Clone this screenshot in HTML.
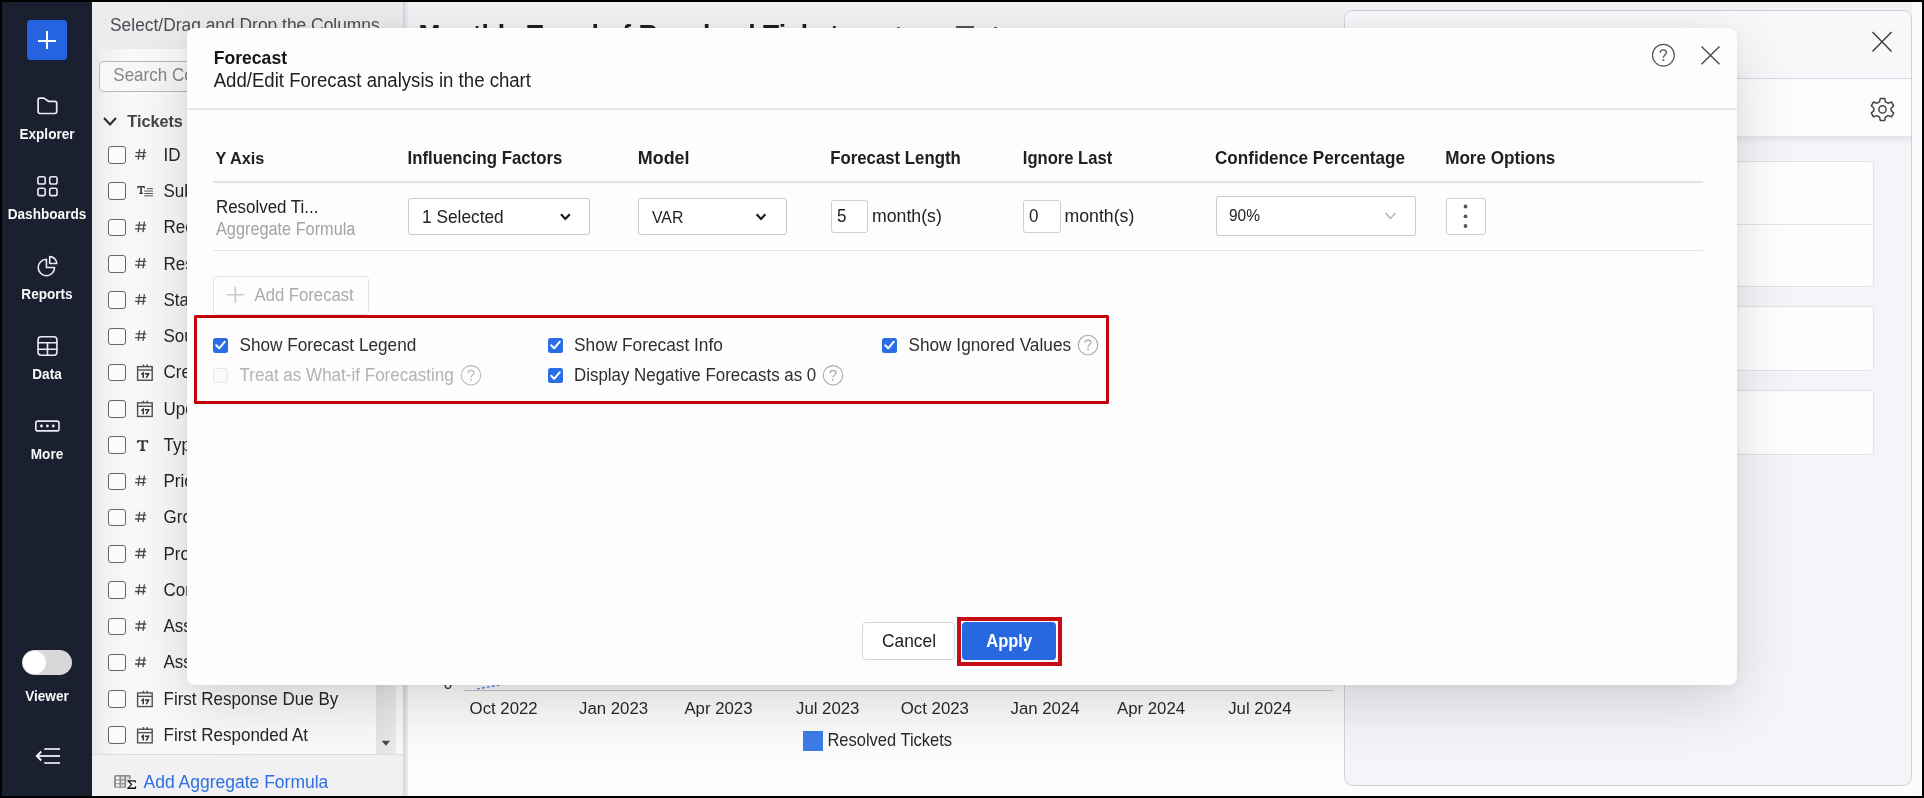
<!DOCTYPE html>
<html><head><meta charset="utf-8"><style>
*{box-sizing:border-box;margin:0;padding:0}
html,body{width:1924px;height:798px;overflow:hidden;background:#000}
body{position:relative;will-change:transform;font-family:"Liberation Sans",sans-serif;color:#222}
.a{position:absolute}
.t{position:absolute;white-space:nowrap;line-height:1}
svg{position:absolute;overflow:visible}
.cb{position:absolute;left:108px;width:18px;height:17.6px;border:1.25px solid #666;border-radius:3px;background:#fbfbfb}
.pl{left:163.5px;font-size:17px;color:#262626;transform:scaleY(1.07);transform-origin:0 14px}
</style></head><body>
<div class="a" style="left:2px;top:2px;width:90px;height:794px;background:#1b2031"></div>
<div class="a" style="left:92px;top:2px;width:312px;height:794px;background:linear-gradient(90deg,#e6e6ea 0,#f2f2f4 14px,#f9f9fa 40px,#fafafb 100%)"></div>
<div class="a" style="left:92px;top:2px;width:311px;height:47px;background:#ececef"></div>
<div class="a" style="left:403px;top:2px;width:1px;height:794px;background:#d6d6da"></div>
<div class="a" style="left:404px;top:2px;width:1518px;height:794px;background:linear-gradient(180deg,#f2f2f4 0,#f3f3f5 30px,#f6f6f7 300px,#fcfcfc 700px)"></div>
<div class="a" style="left:1912px;top:2px;width:10px;height:794px;background:#fafafa"></div>
<div class="a" style="left:404px;top:2px;width:4px;height:794px;background:linear-gradient(90deg,#d9dae0,#eeeef1)"></div>
<div class="a" style="left:27px;top:20px;width:40px;height:40px;border-radius:4px;background:#2563e0"></div>
<div class="a" style="left:46px;top:31px;width:2px;height:18px;background:#fff"></div>
<div class="a" style="left:38px;top:39.5px;width:18px;height:2px;background:#fff"></div>
<svg style="left:0;top:0" width="1924" height="798" viewBox="0 0 1924 798">
<g fill="none" stroke="#ececf0" stroke-width="1.6" stroke-linejoin="round" stroke-linecap="round">
<path d="M38.1,100 Q38.1,98.1 40,98.1 L43.9,98.1 L48.4,101.3 L54.8,101.3 Q56.7,101.3 56.7,103.2 L56.7,111.6 Q56.7,113.5 54.8,113.5 L40,113.5 Q38.1,113.5 38.1,111.6 Z" stroke-width="1.7"/>
<rect x="37.9" y="176.7" width="7.3" height="7.3" rx="1.8"/>
<rect x="49.7" y="176.7" width="7.3" height="7.3" rx="1.8"/>
<rect x="37.9" y="188.3" width="7.3" height="7.3" rx="1.8"/>
<rect x="49.7" y="188.3" width="7.3" height="7.3" rx="1.8"/>
<path d="M46.4,259.3 L46.4,267.5 L54.6,267.5 A8.2,8.2 0 1 1 46.4,259.3 Z"/>
<path d="M49.7,256.6 L49.7,263.5 L56.8,263.5 A7.1,7.1 0 0 0 49.7,256.6 Z"/>
<rect x="38.1" y="336.7" width="18.8" height="18.6" rx="3"/>
<path d="M38.1,342.8 H56.9 M38.1,349.3 H56.9 M47.5,342.8 V355.3"/>
<rect x="35.8" y="421.1" width="23.2" height="9.8" rx="2"/>
</g>
<g fill="#f0f0f4"><circle cx="41.5" cy="426" r="1.4"/><circle cx="47.4" cy="426" r="1.4"/><circle cx="53.3" cy="426" r="1.4"/></g>
<g fill="none" stroke-width="1.9" stroke-linecap="butt">
<path d="M44.3,749 H60.1 M44.3,763 H60.1" stroke="#cfcfd2"/>
<path d="M37.5,756 H60.1" stroke="#e4e7f0"/>
<path d="M41.3,751.5 L36.8,756 L41.3,760.5" stroke="#f4f4f6" stroke-linejoin="miter"/>
</g>
</svg>
<span class="t" style="left:-53px;width:200px;text-align:center;top:128.00px;font-size:13.6px;color:#fafafa;font-weight:700;transform:scaleY(1.14);transform-origin:0 11px;">Explorer</span>
<span class="t" style="left:-53px;width:200px;text-align:center;top:208.00px;font-size:13.6px;color:#fafafa;font-weight:700;transform:scaleY(1.14);transform-origin:0 11px;">Dashboards</span>
<span class="t" style="left:-53px;width:200px;text-align:center;top:288.00px;font-size:13.6px;color:#fafafa;font-weight:700;transform:scaleY(1.14);transform-origin:0 11px;">Reports</span>
<span class="t" style="left:-53px;width:200px;text-align:center;top:368.00px;font-size:13.6px;color:#fafafa;font-weight:700;transform:scaleY(1.14);transform-origin:0 11px;">Data</span>
<span class="t" style="left:-53px;width:200px;text-align:center;top:448.00px;font-size:13.6px;color:#fafafa;font-weight:700;transform:scaleY(1.14);transform-origin:0 11px;">More</span>
<span class="t" style="left:-53px;width:200px;text-align:center;top:690.00px;font-size:13.6px;color:#fafafa;font-weight:700;transform:scaleY(1.14);transform-origin:0 11px;">Viewer</span>
<div class="a" style="left:22px;top:650px;width:50px;height:25px;border-radius:13px;background:#d8d8da"></div>
<div class="a" style="left:22.5px;top:651px;width:23px;height:23px;border-radius:50%;background:#fff"></div>
<span class="t" style="left:110px;top:17.00px;font-size:17.4px;color:#4e4e52;font-weight:400;transform:scaleY(1.07);transform-origin:0 14px;">Select/Drag and Drop the Columns</span>
<div class="a" style="left:99px;top:61px;width:296px;height:31px;border:1px solid #b9b9bd;border-radius:5px;background:#f7f7f8"></div>
<span class="t" style="left:113.3px;top:67.00px;font-size:17px;color:#85858a;font-weight:400;transform:scaleY(1.07);transform-origin:0 14px;">Search Columns</span>
<svg style="left:0;top:0" width="300" height="798"><path d="M104,118 L110,124.5 L116,118" fill="none" stroke="#2b2b2b" stroke-width="2"/></svg>
<span class="t" style="left:127.3px;top:113.00px;font-size:16.2px;color:#444;font-weight:700;transform:scaleY(1.07);transform-origin:0 14px;">Tickets</span>
<div class="cb" style="top:146.20px"></div>
<span class="t pl" style="top:147px">ID</span>
<div class="cb" style="top:182.46px"></div>
<span class="t pl" style="top:183px">Subject</span>
<div class="cb" style="top:218.72px"></div>
<span class="t pl" style="top:219px">Request ID</span>
<div class="cb" style="top:254.98px"></div>
<span class="t pl" style="top:256px">Resolution</span>
<div class="cb" style="top:291.24px"></div>
<span class="t pl" style="top:292px">Status</span>
<div class="cb" style="top:327.50px"></div>
<span class="t pl" style="top:328px">Source</span>
<div class="cb" style="top:363.76px"></div>
<span class="t pl" style="top:364px">Created Time</span>
<div class="cb" style="top:400.02px"></div>
<span class="t pl" style="top:401px">Updated Time</span>
<div class="cb" style="top:436.28px"></div>
<span class="t pl" style="top:437px">Type</span>
<div class="cb" style="top:472.54px"></div>
<span class="t pl" style="top:473px">Priority</span>
<div class="cb" style="top:508.80px"></div>
<span class="t pl" style="top:509px">Group</span>
<div class="cb" style="top:545.06px"></div>
<span class="t pl" style="top:546px">Product</span>
<div class="cb" style="top:581.32px"></div>
<span class="t pl" style="top:582px">Contact</span>
<div class="cb" style="top:617.58px"></div>
<span class="t pl" style="top:618px">Assignee</span>
<div class="cb" style="top:653.84px"></div>
<span class="t pl" style="top:654px">Assigned To</span>
<div class="cb" style="top:690.10px"></div>
<span class="t pl" style="top:691px">First Response Due By</span>
<div class="cb" style="top:726.36px"></div>
<span class="t pl" style="top:727px">First Responded At</span>
<svg style="left:0;top:0" width="300" height="798">
<defs>
<g id="ihash" fill="none" stroke="#4a4a4a" stroke-width="1.3"><path d="M139.6,149.2 L138.2,159.6 M144.4,149.2 L143,159.6 M135.6,152.6 H146.2 M135,156.4 H145.6"/></g>
<g id="itext"><path d="M137.4,185.9 H144.8 V188.4 H144.1 Q143.8,187.2 142.4,187.2 H141.9 V192.7 H142.8 V193.9 H139.4 V192.7 H140.3 V187.2 H139.8 Q138.4,187.2 138.1,188.4 H137.4 Z" fill="#333" transform="translate(0,-36.26)"/>
<path d="M147,188.6 H153 M144.2,191 H153 M144.4,193.5 H153 M144.2,195.8 H153" stroke="#555" stroke-width="1" transform="translate(0,-36.26)"/></g>
<g id="itype"><path d="M137,440.3 H148.2 V443.3 H147.4 Q147,441.6 145.3,441.6 H143.7 V449.5 H145.2 V451 H140 V449.5 H141.5 V441.6 H139.9 Q138.2,441.6 137.8,443.3 H137 Z" fill="#333" transform="translate(0,-290.08)"/></g>
<g id="ical" transform="translate(0,-217.56)"><rect x="137.6" y="366.6" width="14.6" height="13.6" fill="none" stroke="#505050" stroke-width="1.4"/>
<path d="M137.6,370 H152.2" stroke="#505050" stroke-width="1.4"/>
<rect x="142.6" y="364.5" width="1.6" height="2" fill="#505050"/><rect x="146.4" y="364.5" width="1.6" height="2" fill="#505050"/>
<path d="M141.4,374.4 L143.2,373 L143.2,377.9" fill="none" stroke="#333" stroke-width="1.5"/><path d="M144.9,373.6 H148.6 L146.3,377.9" fill="none" stroke="#333" stroke-width="1.5"/></g>
</defs>
<use href="#ihash" x="0" y="0.0"/>
<use href="#itext" x="0" y="36.3"/>
<use href="#ihash" x="0" y="72.5"/>
<use href="#ihash" x="0" y="108.8"/>
<use href="#ihash" x="0" y="145.0"/>
<use href="#ihash" x="0" y="181.3"/>
<use href="#ical" x="0" y="217.6"/>
<use href="#ical" x="0" y="253.8"/>
<use href="#itype" x="0" y="290.1"/>
<use href="#ihash" x="0" y="326.3"/>
<use href="#ihash" x="0" y="362.6"/>
<use href="#ihash" x="0" y="398.9"/>
<use href="#ihash" x="0" y="435.1"/>
<use href="#ihash" x="0" y="471.4"/>
<use href="#ihash" x="0" y="507.6"/>
<use href="#ical" x="0" y="543.9"/>
<use href="#ical" x="0" y="580.2"/></svg>
<div class="a" style="left:376px;top:560px;width:20px;height:194px;background:linear-gradient(90deg,#e4e4e8,#ebebee)"></div>
<svg style="left:0;top:0" width="400" height="798"><path d="M381.6,740.8 L390.2,740.8 L385.9,745.8 Z" fill="#4a4a4a"/></svg>
<div class="a" style="left:92px;top:754px;width:311px;height:42px;background:#f1f1f3;border-top:1px solid #dedee2"></div>
<svg style="left:0;top:0" width="400" height="798">
<rect x="114.1" y="775" width="16.7" height="12.8" rx="1.6" fill="#8c8c8c"/>
<g fill="#fafafa"><rect x="116" y="776.6" width="3.4" height="2.6"/><rect x="116" y="780.4" width="3.4" height="2.8"/><rect x="116" y="784.3" width="3.4" height="2.3"/></g>
<g fill="#dcdcdc"><rect x="121" y="776.6" width="3.4" height="2.6"/><rect x="121" y="780.4" width="3.4" height="2.8"/><rect x="121" y="784.3" width="3.4" height="2.3"/><rect x="126" y="776.6" width="3.2" height="2.6"/></g>
<rect x="126.2" y="779.3" width="11" height="10.6" rx="1" fill="#f6f6f7"/>
<path d="M127.3,780.2 L135.6,780.2 L136,782.8 L135.2,782.8 Q134.8,781.6 133.5,781.6 L129.8,781.6 L132.4,784.6 L129.3,787.6 L133.8,787.6 Q135.1,787.6 135.6,786.1 L136.3,786.1 L135.8,789 L127.2,789 L127.2,788.3 L130.8,784.6 L127.3,780.9 Z" fill="#111"/>
</svg>
<span class="t" style="left:143.5px;top:774.00px;font-size:17.5px;color:#2d6fe3;font-weight:400;transform:scaleY(1.07);transform-origin:0 14px;">Add Aggregate Formula</span>
<span class="t" style="left:418.5px;top:21.00px;font-size:26.4px;color:#1f1f24;font-weight:700;">Monthly Trend of Resolved Tickets</span>
<div class="a" style="left:956px;top:26.3px;width:18px;height:2px;background:#555"></div><div class="a" style="left:896.5px;top:26.5px;width:3px;height:2px;background:#666"></div><div class="a" style="left:994px;top:26.8px;width:3px;height:1.5px;background:#555"></div>
<div class="a" style="left:464px;top:690px;width:869px;height:1px;background:#c6c6ca"></div>
<svg style="left:0;top:0" width="800" height="798"><path d="M477,689 L505,684" stroke="#3a7be6" stroke-width="1.2" stroke-dasharray="3,2"/></svg>
<span class="t" style="left:443.5px;top:676.00px;font-size:16px;color:#333;font-weight:400;transform:scaleY(1.07);transform-origin:0 13px;">0</span>
<span class="t" style="left:469.6px;top:701.00px;font-size:16.8px;color:#2a2a2e;font-weight:400;transform:scaleY(1.03);transform-origin:0 13px;">Oct 2022</span>
<span class="t" style="left:579px;top:701.00px;font-size:16.8px;color:#2a2a2e;font-weight:400;transform:scaleY(1.03);transform-origin:0 13px;">Jan 2023</span>
<span class="t" style="left:684.4px;top:701.00px;font-size:16.8px;color:#2a2a2e;font-weight:400;transform:scaleY(1.03);transform-origin:0 13px;">Apr 2023</span>
<span class="t" style="left:796px;top:701.00px;font-size:16.8px;color:#2a2a2e;font-weight:400;transform:scaleY(1.03);transform-origin:0 13px;">Jul 2023</span>
<span class="t" style="left:900.8px;top:701.00px;font-size:16.8px;color:#2a2a2e;font-weight:400;transform:scaleY(1.03);transform-origin:0 13px;">Oct 2023</span>
<span class="t" style="left:1010.5px;top:701.00px;font-size:16.8px;color:#2a2a2e;font-weight:400;transform:scaleY(1.03);transform-origin:0 13px;">Jan 2024</span>
<span class="t" style="left:1117px;top:701.00px;font-size:16.8px;color:#2a2a2e;font-weight:400;transform:scaleY(1.03);transform-origin:0 13px;">Apr 2024</span>
<span class="t" style="left:1228.2px;top:701.00px;font-size:16.8px;color:#2a2a2e;font-weight:400;transform:scaleY(1.03);transform-origin:0 13px;">Jul 2024</span>
<div class="a" style="left:803px;top:731px;width:20px;height:19.5px;background:#3d7ce8"></div>
<span class="t" style="left:827.4px;top:732.00px;font-size:16.5px;color:#2a2a2e;font-weight:400;transform:scaleY(1.07);transform-origin:0 14px;">Resolved Tickets</span>
<div class="a" style="left:1344px;top:10px;width:568px;height:776px;border:1px solid #cfd2da;border-radius:9px;background:#f4f5f9;overflow:hidden"><div class="a" style="left:0;top:0;width:566px;height:67px;background:#f7f8fa"></div><div class="a" style="left:0;top:67px;width:566px;height:1px;background:#d7dae2"></div><div class="a" style="left:0;top:68px;width:566px;height:57px;background:#fcfcfd"></div><div class="a" style="left:0;top:125px;width:566px;height:8px;background:linear-gradient(#e3e4ea,#f4f5f9)"></div></div>
<div class="a" style="left:1382px;top:161px;width:492px;height:126px;border:1px solid #e0e2e8;border-radius:3px;background:#fefefe"></div>
<div class="a" style="left:1382px;top:306px;width:492px;height:65px;border:1px solid #e0e2e8;border-radius:3px;background:#fefefe"></div>
<div class="a" style="left:1382px;top:390px;width:492px;height:65px;border:1px solid #e0e2e8;border-radius:3px;background:#fefefe"></div>
<div class="a" style="left:1382px;top:224px;width:492px;height:1px;background:#e3e5ea"></div>
<svg style="left:0;top:0" width="1924" height="798">
<path d="M1872.5,32 L1891.5,51.5 M1891.5,32 L1872.5,51.5" stroke="#3a3a3e" stroke-width="1.4"/>
<g transform="translate(1882.5,109.4)" fill="none" stroke="#444" stroke-width="1.5">
<path d="M-2.2,-11 L2.2,-11 L3,-7.6 L5.6,-6.2 L9,-7.4 L11.2,-3.6 L8.6,-1.2 L8.6,1.2 L11.2,3.6 L9,7.4 L5.6,6.2 L3,7.6 L2.2,11 L-2.2,11 L-3,7.6 L-5.6,6.2 L-9,7.4 L-11.2,3.6 L-8.6,1.2 L-8.6,-1.2 L-11.2,-3.6 L-9,-7.4 L-5.6,-6.2 L-3,-7.6 Z" stroke-linejoin="round"/>
<circle r="3.6"/></g>
</svg>
<div class="a" style="left:187px;top:28px;width:1550px;height:657px;background:#fdfdfd;border-radius:8px;box-shadow:0 18px 60px rgba(0,0,0,.15),0 1px 8px rgba(0,0,0,.05)"></div>
<span class="t" style="left:213.7px;top:50.00px;font-size:17.6px;color:#151515;font-weight:700;transform:scaleY(1.07);transform-origin:0 14px;">Forecast</span>
<span class="t" style="left:213.7px;top:72.00px;font-size:18.6px;color:#1e1e1e;font-weight:400;transform:scaleY(1.07);transform-origin:0 15px;">Add/Edit Forecast analysis in the chart</span>
<svg style="left:0;top:0" width="1924" height="798">
<circle cx="1663.4" cy="55.2" r="10.9" fill="none" stroke="#555" stroke-width="1.15"/>
<path d="M1660.2,52.8 C1660.2,50.8 1661.5,49.9 1663.3,49.9 C1665.1,49.9 1666.5,51 1666.5,52.6 C1666.5,54.6 1663.4,55 1663.4,57.8" fill="none" stroke="#555" stroke-width="1.3"/>
<rect x="1662.5" y="59.3" width="1.8" height="1.7" fill="#555"/>
<path d="M1701.5,46.5 L1719.5,64.3 M1719.5,46.5 L1701.5,64.3" stroke="#444" stroke-width="1.3"/>
</svg>
<div class="a" style="left:187px;top:108px;width:1550px;height:2px;background:#e6e6e8"></div>
<span class="t" style="left:215.5px;top:150.00px;font-size:16.25px;color:#202020;font-weight:700;transform:scaleY(1.07);transform-origin:0 14px;">Y Axis</span>
<span class="t" style="left:407.5px;top:151.00px;font-size:16.8px;color:#202020;font-weight:700;transform:scaleY(1.07);transform-origin:0 13px;">Influencing Factors</span>
<span class="t" style="left:637.8px;top:150.00px;font-size:17.9px;color:#202020;font-weight:700;transform:scaleY(1.07);transform-origin:0 14px;">Model</span>
<span class="t" style="left:830.2px;top:151.00px;font-size:16.8px;color:#202020;font-weight:700;transform:scaleY(1.07);transform-origin:0 13px;">Forecast Length</span>
<span class="t" style="left:1022.8px;top:151.00px;font-size:16.6px;color:#202020;font-weight:700;transform:scaleY(1.07);transform-origin:0 13px;">Ignore Last</span>
<span class="t" style="left:1215px;top:150.00px;font-size:17.1px;color:#202020;font-weight:700;transform:scaleY(1.07);transform-origin:0 14px;">Confidence Percentage</span>
<span class="t" style="left:1445.2px;top:150.00px;font-size:17.1px;color:#202020;font-weight:700;transform:scaleY(1.07);transform-origin:0 14px;">More Options</span>
<div class="a" style="left:213px;top:181px;width:1490px;height:2px;background:#e2e2e4"></div>
<span class="t" style="left:216px;top:200.00px;font-size:16.9px;color:#222;font-weight:400;transform:scaleY(1.07);transform-origin:0 13px;">Resolved Ti...</span>
<span class="t" style="left:216px;top:221.00px;font-size:16.3px;color:#a3a3a6;font-weight:400;transform:scaleY(1.07);transform-origin:0 14px;">Aggregate Formula</span>
<div class="a" style="left:408px;top:198px;width:182px;height:37px;border:1px solid #c9c9cc;border-radius:3px;background:#fff"></div>
<span class="t" style="left:422px;top:209.00px;font-size:17.3px;color:#222;font-weight:400;transform:scaleY(1.07);transform-origin:0 14px;">1 Selected</span>
<div class="a" style="left:638px;top:198px;width:149px;height:37px;border:1px solid #c9c9cc;border-radius:3px;background:#fff"></div>
<span class="t" style="left:652px;top:210.00px;font-size:15.8px;color:#222;font-weight:400;transform:scaleY(1.07);transform-origin:0 13px;">VAR</span>
<div class="a" style="left:831px;top:200px;width:37px;height:33px;border:1px solid #d0d0d3;border-radius:3px;background:#fff"></div>
<span class="t" style="left:837px;top:208.00px;font-size:17px;color:#222;font-weight:400;transform:scaleY(1.07);transform-origin:0 14px;">5</span>
<span class="t" style="left:872px;top:208.00px;font-size:17.7px;color:#222;font-weight:400;transform:scaleY(1.07);transform-origin:0 14px;">month(s)</span>
<div class="a" style="left:1023px;top:200px;width:38px;height:33px;border:1px solid #d0d0d3;border-radius:3px;background:#fff"></div>
<span class="t" style="left:1029px;top:208.00px;font-size:17px;color:#222;font-weight:400;transform:scaleY(1.07);transform-origin:0 14px;">0</span>
<span class="t" style="left:1064.5px;top:208.00px;font-size:17.7px;color:#222;font-weight:400;transform:scaleY(1.07);transform-origin:0 14px;">month(s)</span>
<div class="a" style="left:1216px;top:196px;width:200px;height:39.5px;border:1px solid #c9c9cc;border-radius:3px;background:#fff"></div>
<span class="t" style="left:1229px;top:208.00px;font-size:15.5px;color:#222;font-weight:400;transform:scaleY(1.07);transform-origin:0 13px;">90%</span>
<div class="a" style="left:1446px;top:198px;width:40px;height:37px;border:1px solid #cfcfd2;border-radius:3px;background:#fff"></div>
<svg style="left:0;top:0" width="1924" height="798"><g fill="#555"><circle cx="1465.5" cy="206.5" r="1.9"/><circle cx="1465.5" cy="216.3" r="1.9"/><circle cx="1465.5" cy="226" r="1.9"/></g></svg>
<svg style="left:0;top:0" width="1924" height="798" fill="none">
<path d="M561,214.3 L565.4,219 L569.8,214.3" stroke="#1a1a1a" stroke-width="2.2"/>
<path d="M756.6,214.3 L761,219 L765.4,214.3" stroke="#1a1a1a" stroke-width="2.2"/>
<path d="M1385.5,213 L1390.5,218.5 L1395.5,213" stroke="#b4b4b8" stroke-width="1.4"/>
</svg>
<div class="a" style="left:213px;top:250px;width:1490px;height:1px;background:#e4e4e6"></div>
<div class="a" style="left:213px;top:276px;width:156px;height:39px;border:1px solid #e3e3e5;border-radius:4px;background:#fdfdfd"></div>
<svg style="left:0;top:0" width="600" height="798"><path d="M235.3,286.5 V303 M227,294.8 H243.6" stroke="#c9c9cc" stroke-width="1.6"/></svg>
<span class="t" style="left:254.5px;top:288.00px;font-size:16.7px;color:#ababaf;font-weight:400;transform:scaleY(1.07);transform-origin:0 13px;">Add Forecast</span>
<div class="a" style="left:194.4px;top:315.4px;width:915px;height:88.4px;border:3.2px solid #c20008;border-radius:1.5px"></div>
<div class="a" style="left:213px;top:337.5px;width:15px;height:15px;border-radius:2.5px;background:#2b6de6"></div><svg style="left:0;top:0" width="1924" height="798"><path d="M216.2,345.3 L219.2,348.3 L224.8,341.7" fill="none" stroke="#fff" stroke-width="2" stroke-linecap="round" stroke-linejoin="round"/></svg>
<span class="t" style="left:239.5px;top:337.00px;font-size:17.2px;color:#2e2e30;font-weight:400;transform:scaleY(1.07);transform-origin:0 14px;">Show Forecast Legend</span>
<div class="a" style="left:213px;top:368px;width:15px;height:15px;border-radius:2.5px;border:1px solid #e6e6e8;background:#fafafa"></div>
<span class="t" style="left:239.5px;top:367.00px;font-size:17.05px;color:#b3b3b6;font-weight:400;transform:scaleY(1.07);transform-origin:0 14px;">Treat as What-if Forecasting</span>
<svg style="left:0;top:0" width="1924" height="798"><circle cx="471" cy="375.3" r="9.7" fill="none" stroke="#b9b9bd" stroke-width="1.1"/><path d="M468.1,373.1 C468.1,371.3 469.3,370.40000000000003 471,370.40000000000003 C472.7,370.40000000000003 474,371.40000000000003 474,372.90000000000003 C474,374.8 471,375.1 471,377.6" fill="none" stroke="#b9b9bd" stroke-width="1.2"/><rect x="470.15" y="378.90000000000003" width="1.7" height="1.6" fill="#b9b9bd"/></svg>
<div class="a" style="left:548px;top:337.5px;width:15px;height:15px;border-radius:2.5px;background:#2b6de6"></div><svg style="left:0;top:0" width="1924" height="798"><path d="M551.2,345.3 L554.2,348.3 L559.8,341.7" fill="none" stroke="#fff" stroke-width="2" stroke-linecap="round" stroke-linejoin="round"/></svg>
<span class="t" style="left:574px;top:337.00px;font-size:17.3px;color:#2e2e30;font-weight:400;transform:scaleY(1.07);transform-origin:0 14px;">Show Forecast Info</span>
<div class="a" style="left:548px;top:368px;width:15px;height:15px;border-radius:2.5px;background:#2b6de6"></div><svg style="left:0;top:0" width="1924" height="798"><path d="M551.2,375.8 L554.2,378.8 L559.8,372.2" fill="none" stroke="#fff" stroke-width="2" stroke-linecap="round" stroke-linejoin="round"/></svg>
<span class="t" style="left:574px;top:368.00px;font-size:16.9px;color:#2e2e30;font-weight:400;transform:scaleY(1.07);transform-origin:0 13px;">Display Negative Forecasts as 0</span>
<svg style="left:0;top:0" width="1924" height="798"><circle cx="833" cy="375.3" r="9.7" fill="none" stroke="#a8a8ac" stroke-width="1.1"/><path d="M830.1,373.1 C830.1,371.3 831.3,370.40000000000003 833,370.40000000000003 C834.7,370.40000000000003 836,371.40000000000003 836,372.90000000000003 C836,374.8 833,375.1 833,377.6" fill="none" stroke="#a8a8ac" stroke-width="1.2"/><rect x="832.15" y="378.90000000000003" width="1.7" height="1.6" fill="#a8a8ac"/></svg>
<div class="a" style="left:882px;top:337.5px;width:15px;height:15px;border-radius:2.5px;background:#2b6de6"></div><svg style="left:0;top:0" width="1924" height="798"><path d="M885.2,345.3 L888.2,348.3 L893.8,341.7" fill="none" stroke="#fff" stroke-width="2" stroke-linecap="round" stroke-linejoin="round"/></svg>
<span class="t" style="left:908.4px;top:337.00px;font-size:17.25px;color:#2e2e30;font-weight:400;transform:scaleY(1.07);transform-origin:0 14px;">Show Ignored Values</span>
<svg style="left:0;top:0" width="1924" height="798"><circle cx="1088" cy="345" r="9.7" fill="none" stroke="#a8a8ac" stroke-width="1.1"/><path d="M1085.1,342.8 C1085.1,341 1086.3,340.1 1088,340.1 C1089.7,340.1 1091,341.1 1091,342.6 C1091,344.5 1088,344.8 1088,347.3" fill="none" stroke="#a8a8ac" stroke-width="1.2"/><rect x="1087.15" y="348.6" width="1.7" height="1.6" fill="#a8a8ac"/></svg>
<div class="a" style="left:862px;top:622px;width:93px;height:38px;border:1px solid #d6d6d9;border-radius:4px;background:#fff"></div>
<span class="t" style="left:882px;top:633.00px;font-size:17.35px;color:#1e1e1e;font-weight:400;transform:scaleY(1.07);transform-origin:0 14px;">Cancel</span>
<div class="a" style="left:957px;top:617px;width:105px;height:49px;border:4px solid #c40d16"></div>
<div class="a" style="left:962px;top:622px;width:94px;height:38px;border-radius:4px;background:#2767e0"></div>
<span class="t" style="left:986.3px;top:633.00px;font-size:16.5px;color:#fff;font-weight:700;transform:scaleY(1.07);transform-origin:0 14px;">Apply</span>
<div class="a" style="left:0;top:0;width:1924px;height:2px;background:#000"></div>
<div class="a" style="left:0;top:796px;width:1924px;height:2px;background:#000"></div>
<div class="a" style="left:0;top:0;width:2px;height:798px;background:#000"></div>
<div class="a" style="left:1922px;top:0;width:2px;height:798px;background:#000"></div>
</body></html>
